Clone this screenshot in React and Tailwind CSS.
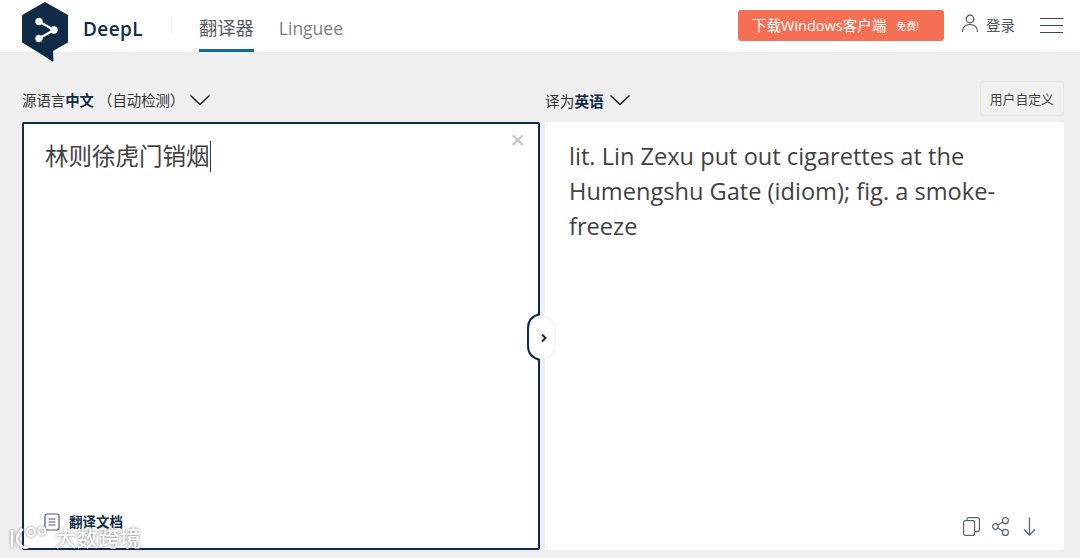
import { useState } from "react";

const font = { fontFamily: '"Open Sans", "Noto Sans CJK SC", sans-serif' };

function Logo() {
  return (
    <svg width="48" height="61" viewBox="0 0 48 61" className="block">
      <path d="M24 2 L46 14.5 V41 L31 49.5 L31.5 59.5 L22.5 53.5 L2 41 V14.5 Z" fill="#0f2b46" stroke="#0f2b46" strokeWidth="2" strokeLinejoin="round" />
      <path d="M18 20.5 L33 29 L18 37.5" fill="none" stroke="#fff" strokeWidth="2.2" />
      <circle cx="18" cy="20.5" r="3.7" fill="#fff" />
      <circle cx="33" cy="29" r="3.7" fill="#fff" />
      <circle cx="18" cy="37.5" r="3.7" fill="#fff" />
    </svg>
  );
}

function Chevron({ className }) {
  return (
    <svg width="22" height="12" viewBox="0 0 22 12" className={className}>
      <path d="M1.5 1.5 L11 10.5 L20.5 1.5" fill="none" stroke="#1a1a1a" strokeWidth="1.5" />
    </svg>
  );
}

function ActionIcons() {
  return (
    <div className="absolute right-[28px] bottom-[14px] flex items-center text-[#566778]">
      <svg width="17" height="19" viewBox="0 0 17 19" fill="none" stroke="currentColor" strokeWidth="1.2">
        <rect x="0.6" y="3.6" width="11" height="14.8" rx="2" fill="#fff" />
        <path d="M4 3.5 V2.6 a2 2 0 0 1 2-2 h8.4 a2 2 0 0 1 2 2 v10 a2 2 0 0 1-2 2 h-2.8" />
      </svg>
      <svg width="17" height="19" viewBox="0 0 17 19" fill="none" stroke="currentColor" strokeWidth="1.2" className="ml-[12px]">
        <circle cx="13.4" cy="3.6" r="3" />
        <circle cx="13.4" cy="15.4" r="3" />
        <circle cx="3.4" cy="9.5" r="2.8" />
        <path d="M5.9 8.1 L10.8 5.1 M5.9 10.9 L10.8 13.9" />
      </svg>
      <svg width="13" height="19" viewBox="0 0 13 19" fill="none" stroke="currentColor" strokeWidth="1.3" className="ml-[14px]">
        <path d="M6.5 0.5 V18 M1 12.5 L6.5 18 L12 12.5" />
      </svg>
    </div>
  );
}

function Watermark() {
  return (
    <div className="absolute left-[10px] bottom-[9px] flex items-end text-white opacity-90 [filter:drop-shadow(0_0_1.5px_rgba(70,70,70,0.75))]">
      <svg width="37" height="26" viewBox="0 0 37 26" fill="none" stroke="#fff" strokeWidth="2.6">
        <path d="M2 7 V24" />
        <path d="M13 6 C7 11 6 15 8 19 C10 23 13 25 18 25" />
        <circle cx="21" cy="9" r="4" strokeWidth="2" />
        <circle cx="32" cy="8" r="3.6" strokeWidth="2" />
      </svg>
      <span className="ml-[8px] text-[21.5px] leading-[22px] font-medium">大数跨境</span>
    </div>
  );
}

export default function App() {
  const [source] = useState("林则徐虎门销烟");

  return (
    <div className="relative w-[1080px] h-[558px] overflow-hidden bg-[#efefef]" style={font}>
      {/* header */}
      <header className="h-[52px] bg-white flex items-start">
        <div className="ml-[21px] mt-[1px]"><Logo /></div>
        <span className="ml-[14px] mt-[16px] text-[19px] leading-[26px] font-semibold text-[#0f2b46] tracking-[0.4px]">DeepL</span>
        <div className="ml-[28px] mt-[16px] w-px h-[18px] bg-[#eeeeee]"></div>
        <div className="ml-[27px] h-[52px] border-b-[3px] border-[#0f6a94] pt-[15px] text-[18.3px] leading-[26px] text-[#555c66]">翻译器</div>
        <div className="ml-[25px] mt-[15px] text-[17.5px] leading-[26px] text-[#7a8088]">Linguee</div>
        <div className="ml-auto flex items-center mt-[10px]">
          <button className="w-[206px] h-[31px] rounded-[3px] bg-[#f56f54] text-white flex items-center pl-[14px]">
            <span className="text-[14.5px] leading-[20px]">下载Windows客户端</span>
            <span className="ml-[10px] text-[10px] leading-[20px]">免费!</span>
          </button>
          <svg width="18" height="20" viewBox="0 0 18 20" fill="none" stroke="#3e5266" strokeWidth="1.2" className="ml-[17px] mb-[3px]">
            <circle cx="9" cy="5" r="3.8" />
            <path d="M1.5 18 C1.5 12.5 5 10.5 9 10.5 C13 10.5 16.5 12.5 16.5 18" />
          </svg>
          <span className="ml-[7px] text-[14.5px] leading-[20px] text-[#4a5866]">登录</span>
          <div className="ml-[25px] mr-[17px] w-[23px] flex flex-col gap-[6px]">
            <div className="h-px bg-[#33475b]"></div>
            <div className="h-px bg-[#33475b]"></div>
            <div className="h-px bg-[#33475b]"></div>
          </div>
        </div>
      </header>

      {/* language bar */}
      <div className="h-[70px] flex">
        <div className="w-[523px] pl-[22px] pt-[39px] flex items-start">
          <span className="text-[14.4px] leading-[20px] text-[#333]">源语言<span className="font-semibold text-[#0f2b46]">中文</span></span>
          <span className="ml-[4px] text-[14.4px] leading-[20px] text-[#333]">（自动检测）</span>
          <Chevron className="ml-[5px] mt-[3px]" />
        </div>
        <div className="flex-1 pl-[22px] pt-[39px] flex items-start">
          <span className="text-[14.7px] leading-[20px] text-[#333]">译为<span className="font-semibold text-[#0f2b46]">英语</span></span>
          <Chevron className="ml-[5px] mt-[3px]" />
          <button className="ml-[349px] -mt-[10px] w-[84px] h-[35px] rounded-[3px] border border-[#e8e8e8] bg-[#f0f0f0] text-[12.8px] leading-[20px] text-[#444]">用户自定义</button>
        </div>
      </div>

      {/* panels */}
      <div className="flex pl-[22px] gap-[5px]">
        <div className="relative w-[518px] h-[428px] bg-white border-2 border-[#0f2b46] rounded-[2px] pl-[21px] pt-[15px]">
          <div className="flex items-center h-[35px]">
            <span className="text-[23.5px] leading-[35px] text-[#424242]">{source}</span>
            <span className="w-px h-[31px] bg-[#333]"></span>
          </div>
          <span className="absolute right-[13px] top-[2px] text-[26px] leading-[26px] font-semibold text-[#c9c9c9]">×</span>
          <div className="absolute left-[20px] bottom-[17px] flex items-center">
            <svg width="16" height="18" viewBox="0 0 16 18" fill="none" stroke="#4a5d70" strokeWidth="1.2">
              <rect x="1" y="1" width="14" height="16" rx="2" />
              <path d="M4.5 6 H11.5 M4.5 9 H11.5 M4.5 12 H11.5" />
            </svg>
            <span className="ml-[9px] text-[13.5px] leading-[16px] font-semibold text-[#0f2b46]">翻译文档</span>
          </div>
        </div>

        <div className="relative w-[519px] h-[428px] bg-white rounded-[3px] pl-[24px] pt-[17px] pr-[60px]">
          <p className="text-[23.6px] leading-[35px] text-[#424242]">
            lit. Lin Zexu put out cigarettes at the Humengshu Gate (idiom); fig. a smoke-freeze
          </p>
          <ActionIcons />
        </div>
      </div>

      {/* swap toggle sitting over the panel seam */}
      <div className="absolute left-[528px] top-[315px] w-[28px] h-[45px] rounded-[14px] bg-white border-2 border-[#f5f5f5] pl-[3px] flex items-center justify-center">
        <svg width="8" height="10" viewBox="0 0 8 10" fill="none" stroke="#0f2b46" strokeWidth="2">
          <path d="M2 1.5 L5.5 5 L2 8.5" />
        </svg>
      </div>
      <svg width="14" height="48" viewBox="0 0 14 48" fill="none" stroke="#0f2b46" strokeWidth="2" className="absolute left-[527px] top-[313px]">
        <path d="M13 1 C5 3 1 8 1 15 V33 C1 40 5 45 13 47" />
      </svg>

      <Watermark />
    </div>
  );
}
